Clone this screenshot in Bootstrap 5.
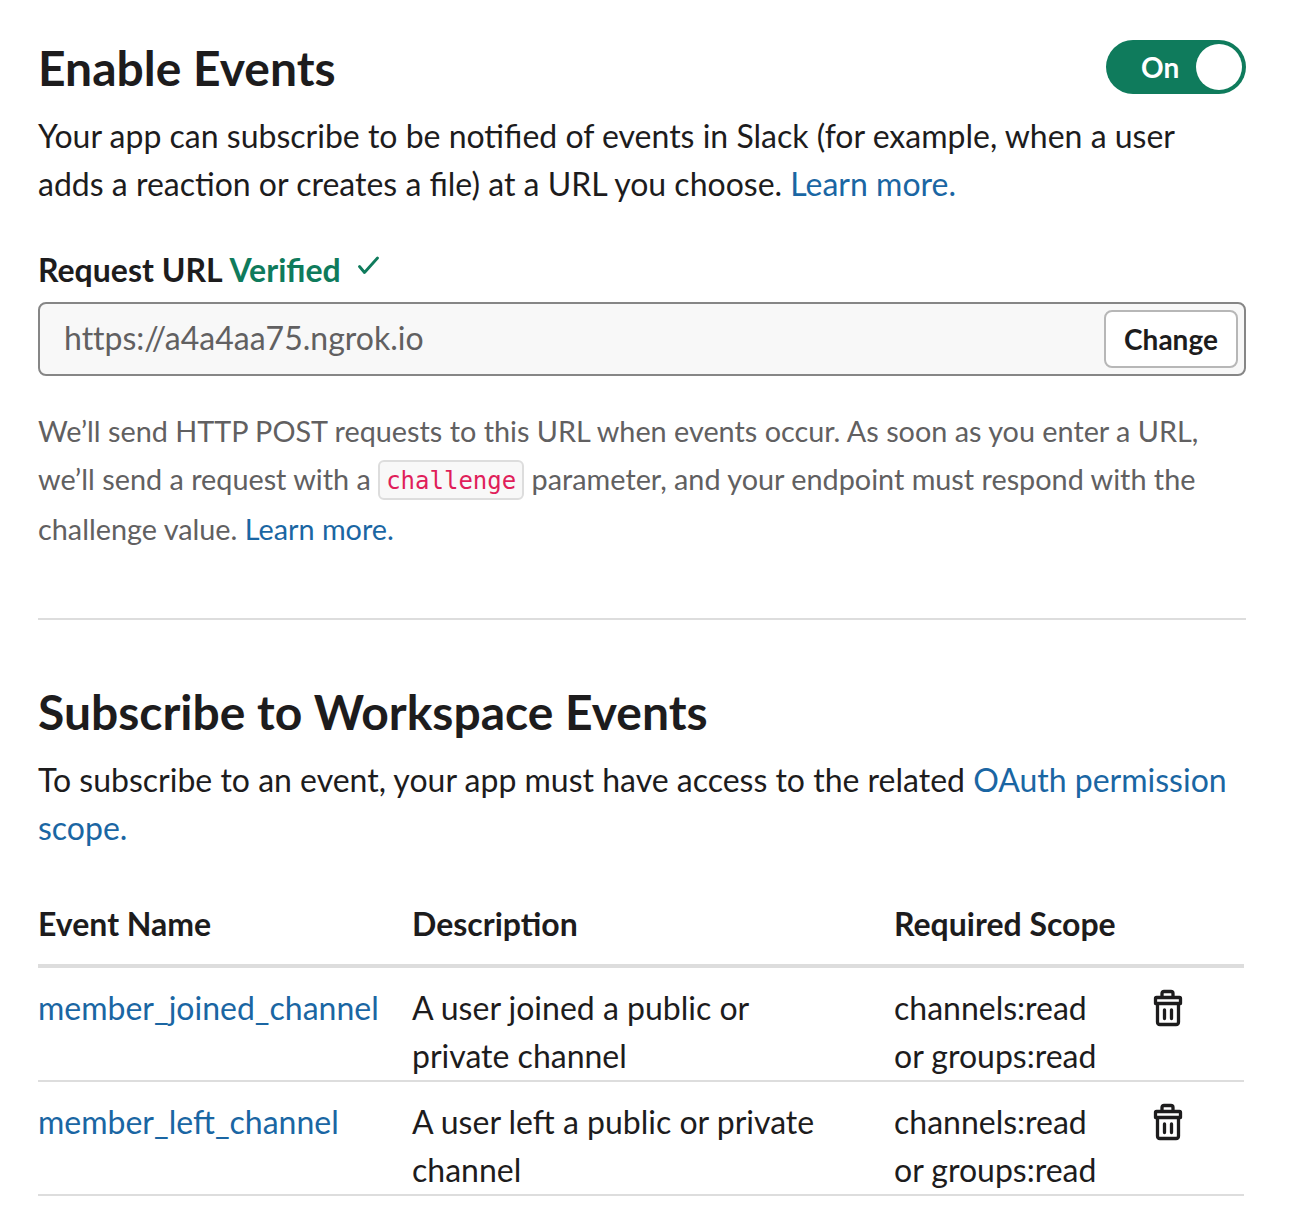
<!DOCTYPE html>
<html lang="en">
<head>
<meta charset="utf-8">
<meta name="viewport" content="width=device-width, initial-scale=1">
<title>Event Subscriptions</title>
<link href="https://cdn.jsdelivr.net/npm/bootstrap@5.3.0/dist/css/bootstrap.min.css" rel="stylesheet">
<style>
  body { font-family: Lato, sans-serif; font-size: 32px; line-height: 48px; color: #1d1c1d; background: #fff; overflow: hidden; }
  a { color: #1a66a3; text-decoration: none; }
  .page { width: 1208px; margin-left: 38px; padding-top: 40px; }
  .title { font-size: 48px; line-height: 56px; font-weight: 700; }
  .copy { white-space: nowrap; }
  .head-row { height: 72px; }
  .toggle { width: 140px; height: 54px; border-radius: 27px; background: #0f7b5c; color: #fff; font-size: 28px; font-weight: 700; padding: 0 4px 0 35px; }
  .knob { width: 46px; height: 46px; border-radius: 50%; background: #fff; }
  .url-label { margin-top: 38px; font-weight: 700; }
  .verified { color: #0f7b5c; }
  .check { margin: -10px 0 0 16px; }
  .url-box { height: 74px; margin-top: 8px; border: 2px solid #868686; border-radius: 8px; background: #f8f8f8; color: #616061; padding: 0 6px 0 24px; }
  .url-value { font-variant-ligatures: none; padding-bottom: 2px; }
  .btn-change { width: 134px; height: 58px; border: 2px solid #b7b7b7; border-radius: 8px; background: #fff; font-size: 28px; line-height: 54px; font-weight: 700; color: #1d1c1d; padding: 0; }
  .hint { margin-top: 31px; font-size: 28.8px; color: #616061; white-space: nowrap; }
  .hint div { height: 48px; }
  .hint div + div + div { margin-top: 2px; }
  .token { display: inline-block; height: 40px; line-height: 39px; width: 146px; text-align: center; border: 2px solid #ddd; border-radius: 6px; background: #f8f8f8; color: #e01e5a; font-family: "DejaVu Sans Mono", monospace; font-size: 24px; padding: 0; vertical-align: middle; margin-top: -6px; }
  .rule { height: 2px; background: #ddd; margin: 65px 0 64px; }
  .events { width: 1206px; margin: 48px 0 0; table-layout: fixed; border-collapse: separate; border-spacing: 0; white-space: nowrap; color: #1d1c1d; }
  .events th { padding: 0 0 16px; border-bottom: 4px solid #ddd; font-weight: 700; }
  .events td { padding: 16px 0 0; border-bottom: 2px solid #ddd; vertical-align: top; }
  .trash { display: block; margin: 5px 0 0 1px; fill: none; stroke: #1d1c1d; stroke-width: 3.3; stroke-linejoin: round; stroke-linecap: round; }
</style>
<script src="https://cdn.jsdelivr.net/npm/bootstrap@5.3.0/dist/js/bootstrap.bundle.min.js" defer></script>
</head>
<body>
<main class="page">
  <section>
    <div class="head-row d-flex justify-content-between align-items-start">
      <h1 class="title mb-0">Enable Events</h1>
      <div class="toggle d-flex justify-content-between align-items-center" role="switch" aria-checked="true"><span>On</span><span class="knob"></span></div>
    </div>
    <p class="copy mb-0">Your app can subscribe to be notified of events in Slack (for example, when a user<br>adds a reaction or creates a file) at a URL you choose. <a href="#">Learn more.</a></p>
    <div class="url-label d-flex align-items-center">Request URL&nbsp;<span class="verified">Verified</span>
      <svg class="check" width="22" height="20" viewBox="0 0 22 20" fill="none" stroke="#0f7b5c" stroke-width="2.8" stroke-linecap="round" stroke-linejoin="round"><path d="M2.500 11.500 7.500 17.500 20.500 3"/></svg>
    </div>
    <div class="url-box d-flex align-items-center justify-content-between">
      <span class="url-value">https://a4a4aa75.ngrok.io</span>
      <button type="button" class="btn btn-change">Change</button>
    </div>
    <div class="hint">
      <div>We’ll send HTTP POST requests to this URL when events occur. As soon as you enter a URL,</div>
      <div>we’ll send a request with a <code class="token">challenge</code> parameter, and your endpoint must respond with the</div>
      <div>challenge value. <a href="#">Learn more.</a></div>
    </div>
  </section>
  <div class="rule"></div>
  <section>
    <h2 class="title mb-0">Subscribe to Workspace Events</h2>
    <p class="copy mb-0 mt-3">To subscribe to an event, your app must have access to the related <a href="#">OAuth permission<br>scope.</a></p>
    <table class="events">
      <colgroup><col style="width:374px"><col style="width:482px"><col style="width:258px"><col></colgroup>
      <thead><tr><th>Event Name</th><th>Description</th><th>Required Scope</th><th></th></tr></thead>
      <tbody>
        <tr><td><a href="#">member_joined_channel</a></td><td>A user joined a public or<br>private channel</td><td>channels:read<br>or groups:read</td>
          <td><svg class="trash" width="30" height="38" viewBox="0 0 30 38"><path d="M9 8V4.500Q9 2.500 11 2.500H18Q20 2.500 20 4.500V8M3.500 8.500H26.500Q27.500 8.500 27.500 9.500V14.500H2.500V9.500Q2.500 8.500 3.500 8.500ZM4.500 14.500V33Q4.500 35.500 7 35.500H23Q25.500 35.500 25.500 33V14.500M11.500 21V29.500M18.500 21V29.500"/></svg></td></tr>
        <tr><td><a href="#">member_left_channel</a></td><td>A user left a public or private<br>channel</td><td>channels:read<br>or groups:read</td>
          <td><svg class="trash" width="30" height="38" viewBox="0 0 30 38"><path d="M9 8V4.500Q9 2.500 11 2.500H18Q20 2.500 20 4.500V8M3.500 8.500H26.500Q27.500 8.500 27.500 9.500V14.500H2.500V9.500Q2.500 8.500 3.500 8.500ZM4.500 14.500V33Q4.500 35.500 7 35.500H23Q25.500 35.500 25.500 33V14.500M11.500 21V29.500M18.500 21V29.500"/></svg></td></tr>
      </tbody>
    </table>
  </section>
</main>
</body>
</html>
